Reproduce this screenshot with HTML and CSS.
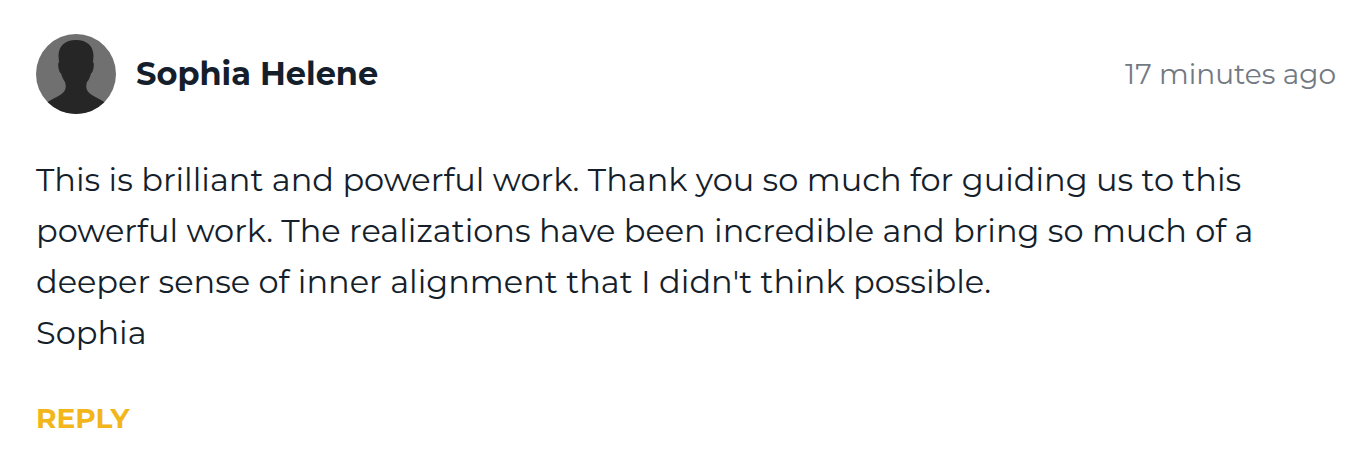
FILE: index.html
```html
<!DOCTYPE html>
<html lang="en">
<head>
  <meta charset="UTF-8">
  <meta name="viewport" content="width=device-width, initial-scale=1.0">
  <title>Comments</title>
  <link rel="stylesheet" href="styles.css">
</head>
<body>
  <article class="comment">
    <header class="comment-header">
      <svg class="avatar" viewBox="0 0 80 80" role="img" aria-label="Sophia Helene">
        <defs>
          <clipPath id="avatar-clip"><circle cx="40" cy="40" r="40"/></clipPath>
        </defs>
        <g clip-path="url(#avatar-clip)">
          <rect width="80" height="80" fill="#707070"/>
          <path fill="#262626" d="M40 6C29 6 22.500 12 22.500 22L23 28C22 29 22 31 22.500 34C23 37 24 39 25 39.500C26 43 27.500 46 29 48C30 51 30 54 29 56C27 61 17 64 12 68L8 80H72L68 68C63 64 53 61 51 56C50 54 50 51 51 48C53 46 54 43 55 39.500C56 39 57 37 57.500 34C58 31 58 29 57 28L57.500 22C57.500 12 51 6 40 6Z"/>
        </g>
      </svg>
      <h2 class="author">Sophia Helene</h2>
      <time class="posted">17 minutes ago</time>
    </header>
    <p class="comment-text">This is brilliant and powerful work. Thank you so much for guiding us to this powerful work. The realizations have been incredible and bring so much of a deeper sense of inner alignment that I didn't think possible.<br>Sophia</p>
    <button class="reply" type="button">REPLY</button>
  </article>
</body>
</html>
```

FILE: styles.css
```css
* {
  box-sizing: border-box;
}

body {
  margin: 0;
  background: #fff;
  color: #151e2b;
  font-family: Montserrat, Inter, sans-serif;
}

.comment {
  padding: 34px 28px 32px 36px;
}

.comment-header {
  display: flex;
  align-items: center;
  gap: 20px;
}

.avatar {
  width: 80px;
  height: 80px;
  flex: none;
}

.author {
  margin: 0;
  font-size: 32px;
  font-weight: 700;
  line-height: 40px;
}

.posted {
  margin-left: auto;
  color: #737982;
  font-size: 28px;
  font-weight: 400;
  line-height: 40px;
}

.comment-text {
  margin: 40px 0;
  font-size: 32px;
  font-weight: 400;
  line-height: 51px;
}

.reply {
  display: block;
  padding: 0;
  border: none;
  background: none;
  color: #f2b61a;
  font-family: inherit;
  font-size: 28px;
  font-weight: 700;
  line-height: 40px;
  cursor: pointer;
}
```
